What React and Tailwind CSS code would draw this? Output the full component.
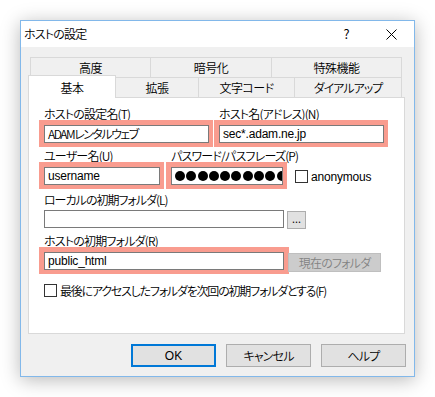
import React from "react";

const F = "font-['Noto_Sans_CJK_JP',sans-serif] [font-feature-settings:'palt'] font-[350]";
const L = "font-['Liberation_Sans','Noto_Sans_CJK_JP',sans-serif]";

function Label({ children, cls = "" }) {
  return (
    <div className={"h-[12px] leading-[12px] pl-[5px] text-[12px] whitespace-nowrap tracking-[-0.8px] " + cls}>{children}</div>
  );
}

function Input({ children, cls = "" }) {
  return (
    <div className={"h-[18px] bg-white border border-[#7a7a7a] flex items-center pl-[3px] text-[12px] leading-[16px] overflow-hidden whitespace-nowrap " + cls}>
      {children}
    </div>
  );
}

function Check() {
  return <div className="w-[13px] h-[13px] border border-[#333333] bg-white shrink-0" />;
}

const HL = "bg-[#f99c8f] pt-[5px] pb-[4px] pl-[5px] pr-[4px]";

export default function App() {
  const dots = [0, 1, 2, 3, 4, 5, 6, 7, 8, 9];
  return (
    <div className={"w-[435px] h-[397px] bg-white pt-[20px] pl-[20px] text-black " + F}>
      <div className="w-[395px] h-[357px] border border-[#82b8ea] bg-[#f0f0f0] flex flex-col shadow-[0_3px_18px_rgba(0,0,0,0.28)]">
        {/* title bar */}
        <div className="h-[26px] bg-white flex items-center shrink-0">
          <div className="pl-[3px] text-[12px] flex-1 tracking-[-0.8px]">ホストの設定</div>
          <div className="w-[45px] h-full flex items-center justify-center text-[13px]">?</div>
          <div className="w-[45px] h-full flex items-center justify-center">
            <svg width="11" height="11" viewBox="0 0 11 11">
              <path d="M0.5 0.5 L10.5 10.5 M10.5 0.5 L0.5 10.5" stroke="#000" strokeWidth="1" />
            </svg>
          </div>
        </div>
        {/* body */}
        <div className="flex flex-col pt-[10px] pl-[7px]">
          {/* tabs row 1 */}
          <div className="flex h-[20px] ml-[2px] text-[12px] tracking-[-0.5px]">
            <div className="w-[120px] border-t border-l border-[#d9d9d9] flex items-center justify-center">高度</div>
            <div className="w-[121px] border-t border-l border-[#d9d9d9] flex items-center justify-center">暗号化</div>
            <div className="w-[131px] border-t border-l border-r border-[#d9d9d9] flex items-center justify-center">特殊機能</div>
          </div>
          {/* tabs row 2 */}
          <div className="flex h-[20px] relative z-10 text-[12px] tracking-[-0.5px]">
            <div className="w-[88px] h-[23px] -mt-[2px] bg-white border-t border-l border-r border-[#d9d9d9] flex items-start justify-center pt-[3px]">基本</div>
            <div className="w-[83px] border-t border-r border-[#d9d9d9] flex items-center justify-center">拡張</div>
            <div className="w-[96px] border-t border-r border-[#d9d9d9] flex items-center justify-center">文字コード</div>
            <div className="w-[107px] border-t border-r border-[#d9d9d9] flex items-center justify-center tracking-[-1px]">ダイアルアップ</div>
          </div>
          {/* panel */}
          <div className="w-[377px] h-[237px] bg-white border border-[#d9d9d9] pt-[10px] pl-[10px] flex flex-col">
            {/* row A */}
            <div className="grid grid-cols-[174px_174px] gap-x-[1px]">
              <Label>ホストの設定名(T)</Label>
              <Label>ホスト名(アドレス)(N)</Label>
              <div className={HL}>
                <Input cls="tracking-[-1.5px]">ADAMレンタルウェブ</Input>
              </div>
              <div className={HL}>
                <Input cls={"tracking-[-0.2px] " + L}>sec*.adam.ne.jp</Input>
              </div>
            </div>
            {/* row B */}
            <div className="grid grid-cols-[125px_121px_auto] gap-x-[2px] mt-[3px]">
              <Label>ユーザー名(U)</Label>
              <Label>パスワード/パスフレーズ(P)</Label>
              <div />
              <div className={HL}>
                <Input cls={"tracking-[-0.2px] " + L}>username</Input>
              </div>
              <div className={HL}>
                <div className="h-[18px] bg-white border border-[#7a7a7a] flex items-center pl-[3px] overflow-hidden">
                  {dots.map((d) => (
                    <div key={d} className="w-[10px] h-[10px] rounded-full bg-black shrink-0 mr-[1.3px]" />
                  ))}
                </div>
              </div>
              <div className="flex items-center pl-[6px] pt-[2px]">
                <Check />
                <span className={"ml-[3px] text-[12px] tracking-[-0.2px] " + L}>anonymous</span>
              </div>
            </div>
            {/* row C */}
            <Label cls="mt-[5px] tracking-[-1px]">ローカルの初期フォルダ(L)</Label>
            <div className="flex mt-[4px] pl-[5px]">
              <div className="w-[240px] shrink-0">
                <Input></Input>
              </div>
              <div className="ml-[3px] mt-[1px] w-[19px] h-[18px] bg-[#e1e1e1] border border-[#adadad] flex items-center justify-center text-[11px] leading-none pb-[3px]">...</div>
            </div>
            {/* row D */}
            <div className="grid grid-cols-[250px_auto] mt-[6px]">
              <Label>ホストの初期フォルダ(R)</Label>
              <div />
              <div className={HL + " pr-[5px]"}>
                <Input cls={"tracking-[-0.2px] " + L}>public_html</Input>
              </div>
              <div className="pt-[6px] -ml-[1px]">
                <div className="w-[93px] h-[19px] bg-[#cccccc] border border-[#bfbfbf] text-[#838383] text-[12px] tracking-[-0.8px] flex items-center justify-center">現在のフォルダ</div>
              </div>
            </div>
            {/* row E */}
            <div className="flex items-center mt-[10px] pl-[5px] h-[13px]">
              <Check />
              <span className="ml-[3px] text-[12px] whitespace-nowrap tracking-[-1.2px]">最後にアクセスしたフォルダを次回の初期フォルダとする(F)</span>
            </div>
          </div>
          {/* buttons */}
          <div className="flex justify-end gap-[10px] mt-[10px] w-[378px] text-[12px]">
            <div className={"w-[85px] h-[23px] bg-[#e1e1e1] border-2 border-[#0078d7] flex items-center justify-center " + L}>OK</div>
            <div className="w-[85px] h-[23px] bg-[#e1e1e1] border border-[#adadad] flex items-center justify-center tracking-[-0.8px]">キャンセル</div>
            <div className="w-[85px] h-[23px] bg-[#e1e1e1] border border-[#adadad] flex items-center justify-center tracking-[-0.8px]">ヘルプ</div>
          </div>
        </div>
      </div>
    </div>
  );
}
